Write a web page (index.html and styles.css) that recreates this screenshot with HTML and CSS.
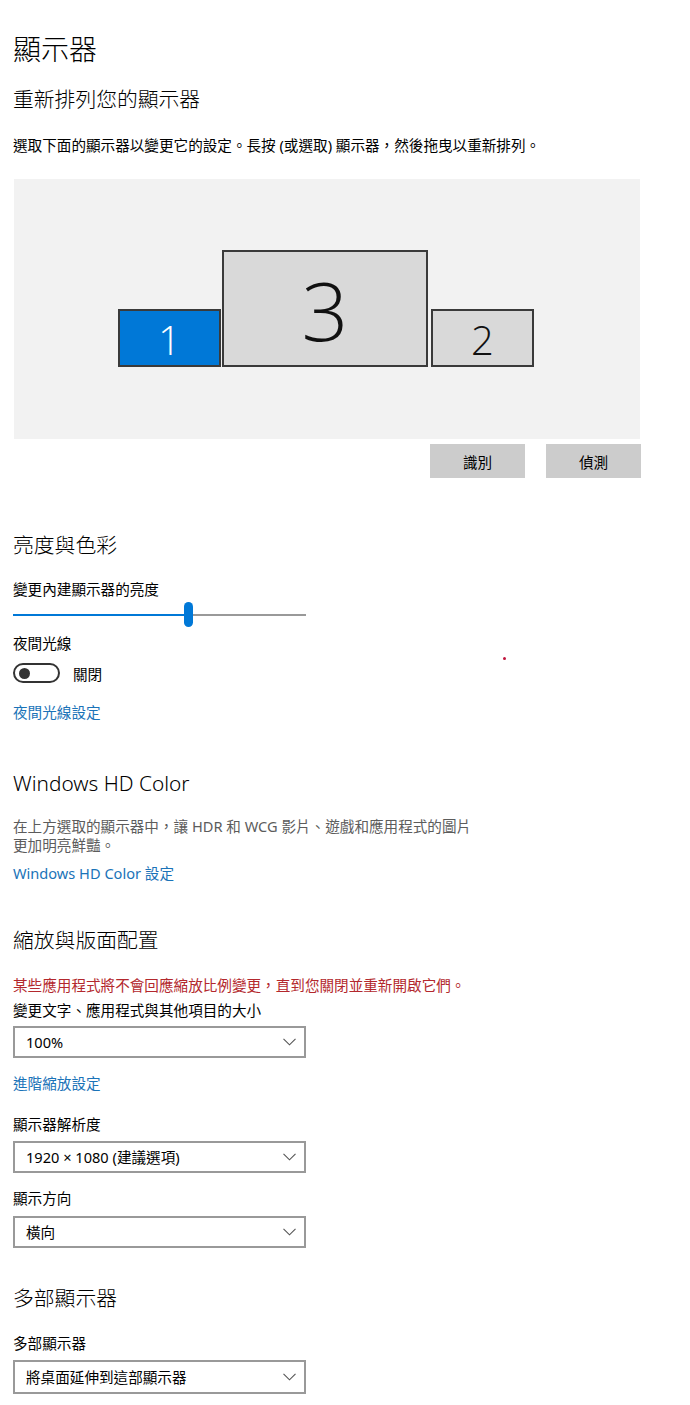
FILE: index.html
```html
<!DOCTYPE html>
<html lang="zh-Hant">
<head>
<meta charset="utf-8">
<title>顯示器</title>
<link rel="stylesheet" href="styles.css">
</head>
<body>
<div class="page">
  <h1 class="title">顯示器</h1>
  <h2 class="heading h-arrange">重新排列您的顯示器</h2>
  <p class="text desc">選取下面的顯示器以變更它的設定。長按 (或選取) 顯示器，然後拖曳以重新排列。</p>

  <div class="canvas">
    <div class="monitor m1 selected"><span class="num">1</span></div>
    <div class="monitor m3"><span class="num big">3</span></div>
    <div class="monitor m2"><span class="num">2</span></div>
  </div>
  <div class="btn-row">
    <button class="btn">識別</button>
    <button class="btn">偵測</button>
  </div>

  <h2 class="heading h-bright">亮度與色彩</h2>
  <p class="text lbl-bright">變更內建顯示器的亮度</p>
  <div class="slider">
    <div class="track-fill"></div>
    <div class="thumb"></div>
    <div class="track-rest"></div>
  </div>
  <p class="text lbl-night">夜間光線</p>
  <div class="toggle-row">
    <span class="toggle"><span class="dot"></span></span>
    <span class="text toggle-text">關閉</span>
  </div>
  <a class="text link l-night">夜間光線設定</a>

  <h2 class="heading h-hd">Windows HD Color</h2>
  <p class="text gray hd-desc">在上方選取的顯示器中，讓 HDR 和 WCG 影片、遊戲和應用程式的圖片<br>更加明亮鮮豔。</p>
  <a class="text link l-hd">Windows HD Color 設定</a>

  <h2 class="heading h-scale">縮放與版面配置</h2>
  <p class="text warn">某些應用程式將不會回應縮放比例變更，直到您關閉並重新開啟它們。</p>
  <p class="text lbl-size">變更文字、應用程式與其他項目的大小</p>
  <div class="select s1"><span class="text">100%</span><svg class="chev" width="13" height="8" viewBox="0 0 13 8"><path d="M0.5 0.8 L6.5 6.8 L12.5 0.8" fill="none" stroke="#555" stroke-width="1.1"/></svg></div>
  <a class="text link l-scale">進階縮放設定</a>
  <p class="text lbl-res">顯示器解析度</p>
  <div class="select s2"><span class="text">1920 × 1080 (建議選項)</span><svg class="chev" width="13" height="8" viewBox="0 0 13 8"><path d="M0.5 0.8 L6.5 6.8 L12.5 0.8" fill="none" stroke="#555" stroke-width="1.1"/></svg></div>
  <p class="text lbl-orient">顯示方向</p>
  <div class="select s3"><span class="text">橫向</span><svg class="chev" width="13" height="8" viewBox="0 0 13 8"><path d="M0.5 0.8 L6.5 6.8 L12.5 0.8" fill="none" stroke="#555" stroke-width="1.1"/></svg></div>

  <h2 class="heading h-multi">多部顯示器</h2>
  <p class="text lbl-multi">多部顯示器</p>
  <div class="select s4"><span class="text">將桌面延伸到這部顯示器</span><svg class="chev" width="13" height="8" viewBox="0 0 13 8"><path d="M0.5 0.8 L6.5 6.8 L12.5 0.8" fill="none" stroke="#555" stroke-width="1.1"/></svg></div>
</div>
<span class="red-dot"></span>
</body>
</html>
```

FILE: styles.css
```css
html, body {
  margin: 0;
  padding: 0;
  background: #fff;
}
body {
  position: relative;
  width: 690px;
  height: 1405px;
  overflow: hidden;
  font-family: "Noto Sans", "Noto Sans CJK TC", sans-serif;
  color: #000;
}
.page {
  padding: 31px 0 0 13px;
  display: flex;
  flex-direction: column;
  align-items: flex-start;
}
.title {
  margin: 0;
  font-size: 28px;
  line-height: 36px;
  font-weight: 300;
}
.heading {
  margin: 0;
  font-size: 20.8px;
  line-height: 28px;
  font-weight: 300;
}
.text {
  margin: 0;
  font-size: 14.6px;
  line-height: 20px;
}
.gray { color: #5c5c5c; }
.link { color: #1a73b8; text-decoration: none; }
.warn { color: #b3282d; }

.h-arrange { margin-top: 18px; }
.desc { margin-top: 22px; }

.canvas {
  position: relative;
  margin-top: 24px;
  margin-left: 1px;
  width: 626px;
  height: 260px;
  background: #f2f2f2;
}
.monitor {
  position: absolute;
  box-sizing: border-box;
  border: 2px solid #3a3a3a;
  background: #d9d9d9;
  display: flex;
  align-items: center;
  justify-content: center;
}
.monitor.selected { background: #0078d7; }
.m1 { left: 104px; top: 130px; width: 103px; height: 58px; }
.m3 { left: 208px; top: 71px; width: 206px; height: 117px; }
.m2 { left: 417px; top: 130px; width: 103px; height: 58px; }
.num {
  font-family: "Open Sans", "Noto Sans", sans-serif;
  font-weight: 300;
  font-size: 40px;
  line-height: 1;
  color: #111;
  margin-top: 4px;
}
.selected .num { color: #fff; }
.num.big { font-size: 82px; margin-top: 0; }

.btn-row {
  align-self: stretch;
  margin-top: 5px;
  width: 628px;
  display: flex;
  justify-content: flex-end;
  gap: 21px;
}
.btn {
  width: 95px;
  height: 34px;
  border: none;
  background: #cccccc;
  font-family: inherit;
  font-size: 14.6px;
  color: #000;
  padding: 0;
}

.h-bright { margin-top: 53px; }
.lbl-bright { margin-top: 20px; }
.slider {
  margin-top: 3px;
  width: 293px;
  height: 25px;
  display: flex;
  align-items: center;
}
.track-fill { width: 171px; height: 2px; background: #0078d7; }
.thumb { width: 9px; height: 25px; border-radius: 4.5px; background: #0078d7; }
.track-rest { flex: 1; height: 2px; background: #999; }

.lbl-night { margin-top: 6px; }
.toggle-row {
  margin-top: 10px;
  height: 20px;
  display: flex;
  align-items: center;
  gap: 13px;
}
.toggle {
  box-sizing: border-box;
  width: 47px;
  height: 20px;
  border: 2px solid #333;
  border-radius: 10px;
  display: flex;
  align-items: center;
  padding-left: 4px;
}
.dot { width: 11px; height: 11px; border-radius: 50%; background: #333; }
.toggle-text { line-height: 20px; margin-top: 1px; }
.l-night { margin-top: 19px; }

.h-hd { margin-top: 47px; }
.hd-desc { margin-top: 20px; line-height: 19px; }
.l-hd { margin-top: 8px; }

.h-scale { margin-top: 43px; }
.warn { margin-top: 21px; }
.lbl-size { margin-top: 5px; }
.select {
  box-sizing: border-box;
  width: 293px;
  height: 32px;
  border: 2px solid #999;
  background: #fff;
  display: flex;
  align-items: center;
  justify-content: space-between;
  padding: 0 8px 0 11px;
}
.s1 { margin-top: 6px; }
.l-scale { margin-top: 15px; }
.lbl-res { margin-top: 21px; }
.s2 { margin-top: 7px; }
.lbl-orient { margin-top: 15px; }
.s3 { margin-top: 8px; }
.h-multi { margin-top: 36px; }
.lbl-multi { margin-top: 21px; }
.s4 { margin-top: 7px; height: 34px; }

.red-dot {
  position: absolute;
  left: 503px;
  top: 657px;
  width: 3px;
  height: 3px;
  border-radius: 50%;
  background: #c0143c;
}
```
